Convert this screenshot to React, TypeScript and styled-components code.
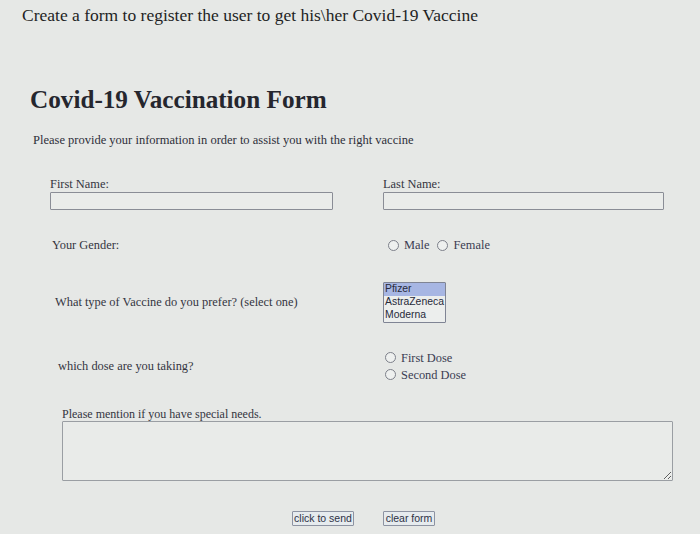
import React from 'react';
import styled, { createGlobalStyle } from 'styled-components';

const GlobalStyle = createGlobalStyle`
  html, body {
    margin: 0;
    padding: 0;
    background: #e6e8e6;
  }
  body {
    font-family: 'Liberation Serif', 'Times New Roman', serif;
    color: #2b2c36;
  }
`;

const Page = styled.div`
  width: 700px;
  height: 534px;
  overflow: hidden;
  background: #e6e8e6;
`;

const Task = styled.p`
  margin: 0;
  padding: 4px 0 0 22px;
  font-size: 17.5px;
  line-height: 22px;
  color: #1e1f24;
`;

const Section = styled.section`
  padding: 58px 0 0 30px;
`;

const Title = styled.h1`
  margin: 0;
  font-size: 25.2px;
  line-height: 32px;
  font-weight: bold;
  color: #25262e;
`;

const Intro = styled.p`
  margin: 16px 0 0 3px;
  font-size: 12.5px;
  line-height: 16px;
  color: #2e2f3a;
`;

const Form = styled.form`
  margin-top: 26px;
`;

const Row = styled.div<{ $indent: number; $height: number }>`
  display: grid;
  grid-template-columns: ${(p) => 383 - p.$indent}px 1fr;
  align-items: center;
  height: ${(p) => p.$height}px;
  padding-left: ${(p) => p.$indent}px;
`;

const Field = styled.div<{ $shift?: number }>`
  display: flex;
  flex-direction: column;
  margin-left: ${(p) => p.$shift || 0}px;
`;

const Label = styled.label`
  font-size: 12.4px;
  line-height: 15px;
  color: #34353f;
`;

const TextInput = styled.input<{ $width: number }>`
  box-sizing: border-box;
  width: ${(p) => p.$width}px;
  height: 18px;
  margin: 0;
  border: 1px solid #8a8d96;
  border-radius: 1px;
  background: #eaecea;
  font-family: 'Liberation Sans', Arial, sans-serif;
`;

const Choices = styled.div<{ $column?: boolean }>`
  display: flex;
  flex-direction: ${(p) => (p.$column ? 'column' : 'row')};
  align-items: ${(p) => (p.$column ? 'flex-start' : 'center')};
  gap: ${(p) => (p.$column ? '3px' : '8px')};
  margin-left: ${(p) => (p.$column ? 2 : 5)}px;
`;

const Choice = styled.label`
  display: flex;
  align-items: center;
  gap: 5px;
  font-size: 12.4px;
  line-height: 14px;
  color: #3a3c52;
`;

const Radio = styled.input`
  appearance: none;
  box-sizing: border-box;
  width: 11px;
  height: 11px;
  margin: 0;
  border: 1px solid #7d808a;
  border-radius: 50%;
  background: #eef0ef;
`;

const ListBox = styled.select`
  box-sizing: border-box;
  width: 63px;
  height: 41px;
  margin: 0;
  padding: 0;
  border: 1px solid #7f8494;
  border-radius: 1px;
  background: #eceeed;
  font-family: 'Liberation Sans', Arial, sans-serif;
  font-size: 10.4px;
  color: #272a3a;
  overflow: hidden;

  option {
    padding: 0 1px;
    line-height: 13px;
    min-height: 13px;
  }
  option:checked {
    background: linear-gradient(#a7b6e3, #a7b6e3);
    color: #272a3a;
  }
`;

const TextArea = styled.textarea`
  box-sizing: border-box;
  display: block;
  width: 611px;
  height: 60px;
  margin: 0;
  border: 1px solid #9a9ea3;
  border-radius: 1px;
  background: #e9ebe9;
  resize: both;
`;

const NeedsLabel = styled(Label)`
  font-size: 12px;
  line-height: 12px;
  margin-bottom: 1px;
`;

const Needs = styled(Field)`
  margin-top: 2px;
`;

const Actions = styled.div`
  display: flex;
  gap: 29px;
  padding-left: 292px;
  margin-top: 30px;
`;

const Button = styled.button<{ $width: number }>`
  box-sizing: border-box;
  width: ${(p) => p.$width}px;
  height: 15px;
  margin: 0;
  padding: 0;
  border: 1px solid #8d93a2;
  border-radius: 1px;
  background: #e6ebee;
  font-family: 'Liberation Sans', Arial, sans-serif;
  font-size: 10.5px;
  line-height: 13px;
  color: #2d3245;
`;

export default function App() {
  return (
    <Page>
      <GlobalStyle />
      <Task>Create a form to register the user to get his\her Covid-19 Vaccine</Task>
      <Section>
        <Title>Covid-19 Vaccination Form</Title>
        <Intro>Please provide your information in order to assist you with the right vaccine</Intro>
      </Section>
      <Form onSubmit={(e) => e.preventDefault()}>
        <Row $indent={50} $height={38}>
          <Field>
            <Label htmlFor="first">First Name:</Label>
            <TextInput id="first" type="text" $width={283} />
          </Field>
          <Field>
            <Label htmlFor="last">Last Name:</Label>
            <TextInput id="last" type="text" $width={281} />
          </Field>
        </Row>
        <Row $indent={52} $height={66}>
          <Label>Your Gender:</Label>
          <Choices>
            <Choice>
              <Radio type="radio" name="gender" value="male" />
              Male
            </Choice>
            <Choice>
              <Radio type="radio" name="gender" value="female" />
              Female
            </Choice>
          </Choices>
        </Row>
        <Row $indent={55} $height={48}>
          <Label>What type of Vaccine do you prefer? (select one)</Label>
          <Field>
            <ListBox size={3} defaultValue="Pfizer">
              <option>Pfizer</option>
              <option>AstraZeneca</option>
              <option>Moderna</option>
            </ListBox>
          </Field>
        </Row>
        <Row $indent={58} $height={80}>
          <Label>which dose are you taking?</Label>
          <Choices $column>
            <Choice>
              <Radio type="radio" name="dose" value="first" />
              First Dose
            </Choice>
            <Choice>
              <Radio type="radio" name="dose" value="second" />
              Second Dose
            </Choice>
          </Choices>
        </Row>
        <Needs $shift={62}>
          <NeedsLabel htmlFor="needs">Please mention if you have special needs.</NeedsLabel>
          <TextArea id="needs" />
        </Needs>
        <Actions>
          <Button type="submit" $width={62}>click to send</Button>
          <Button type="reset" $width={52}>clear form</Button>
        </Actions>
      </Form>
    </Page>
  );
}
